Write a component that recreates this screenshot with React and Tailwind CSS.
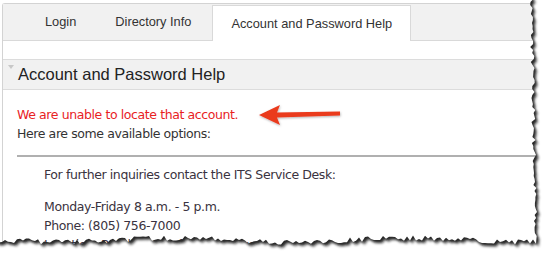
import React from 'react';

// deterministic jitter for the torn paper edge
function makeRand(seed) {
  let s = seed;
  return () => {
    s = (s * 16807) % 2147483647;
    return (s - 1) / 2147483646;
  };
}

function tornPath() {
  const rnd = makeRand(7);
  const pts = [];
  // right edge, top to bottom
  for (let y = -4; y <= 238; y += 3) {
    const base = 531 + (y / 238) * 4;
    pts.push([base + (rnd() - 0.4) * 4.5, y]);
  }
  // bottom edge, right to left
  for (let x = 536; x >= -4; x -= 3) {
    const base = 240 + Math.sin(x / 37) * 1.8;
    pts.push([x, base + (rnd() - 0.5) * 5.5]);
  }
  return 'M' + pts.map((p) => p[0].toFixed(1) + ' ' + p[1].toFixed(1)).join(' L') + ' L-4 -4 Z';
}

const PAPER = tornPath();

function TornEdge() {
  return (
    <svg className="absolute inset-0 pointer-events-none" width="549" height="258" viewBox="0 0 549 258">
      <defs>
        <mask id="outside">
          <rect x="0" y="0" width="549" height="258" fill="white" />
          <path d={PAPER} fill="black" />
        </mask>
        <filter id="blur" x="-10%" y="-10%" width="120%" height="120%">
          <feGaussianBlur stdDeviation="1.8" />
        </filter>
        <filter id="blur2" x="-10%" y="-10%" width="120%" height="120%">
          <feGaussianBlur stdDeviation="0.8" />
        </filter>
      </defs>
      <g mask="url(#outside)">
        <rect x="0" y="0" width="549" height="258" fill="white" />
        <path d={PAPER} fill="#111" opacity="0.85" filter="url(#blur)" transform="translate(2.5 3)" />
        <path d={PAPER} fill="#222" opacity="0.8" filter="url(#blur2)" transform="translate(1 1.2)" />
      </g>
    </svg>
  );
}

function Arrow() {
  return (
    <svg className="absolute left-[254px] top-[101px]" width="92" height="30" viewBox="0 0 92 30">
      <defs>
        <filter id="ashadow" x="-20%" y="-30%" width="140%" height="160%">
          <feDropShadow dx="0.5" dy="1" stdDeviation="1" floodColor="#000" floodOpacity="0.3" />
        </filter>
      </defs>
      <path
        d="M5 14 L26 4 L23 11.5 L86 10.5 L86 14.5 L23 16.5 L26 24 Z"
        fill="#ea3a1e"
        filter="url(#ashadow)"
      />
    </svg>
  );
}

export default function App() {
  return (
    <div className="relative w-[549px] h-[258px] overflow-hidden bg-white font-['Liberation_Sans',Arial,sans-serif]">
      <div className="ml-[2px] mt-[3px] h-[260px] border-l border-t border-[#d3d3d3] rounded-tl-[3px]">
        <div className="flex items-end h-[37px] pl-[24px] gap-[3px] bg-[#f1f1f1] border-b border-[#d9d9d9]">
          <div className="h-[36px] px-[18px] flex items-center text-[12.8px] text-[#333]">Login</div>
          <div className="h-[36px] px-[18px] flex items-center text-[12.8px] text-[#333]">Directory Info</div>
          <div className="h-[36px] -mb-px px-[18px] flex items-center text-[12.8px] text-[#333] bg-white border-x border-t border-[#d9d9d9]">
            Account and Password Help
          </div>
        </div>

        <div className="h-[18px]" />

        <div className="relative h-[31px] flex items-center pl-[15px] bg-[#f1f1f1] border-y border-[#dcdcdc] text-[16.5px] text-[#222]">
          <span className="absolute left-[5px] top-[5px] w-0 h-0 border-l-[3px] border-r-[3px] border-t-[4px] border-l-transparent border-r-transparent border-t-[#c8c8c8]" />
          Account and Password Help
        </div>

        <div className="pl-[14px] pt-[15px] font-['DejaVu_Sans',Verdana,sans-serif] text-[12.5px] tracking-[-0.4px] leading-[19px] text-[#333]">
          <div className="text-[#e8221f]">We are unable to locate that account.</div>
          <div>Here are some available options:</div>
          <div className="mt-[12px] h-[2px] bg-[#b0b0b0]" />
          <div className="pl-[27px] pt-[8px] text-[#3a3340]">
            <div>For further inquiries contact the ITS Service Desk:</div>
            <div className="mt-[13px]">Monday-Friday 8 a.m. - 5 p.m.</div>
            <div>Phone: (805) 756-7000</div>
            <div>Location: Building 10 of the campus</div>
          </div>
        </div>
      </div>

      <Arrow />
      <TornEdge />
    </div>
  );
}
